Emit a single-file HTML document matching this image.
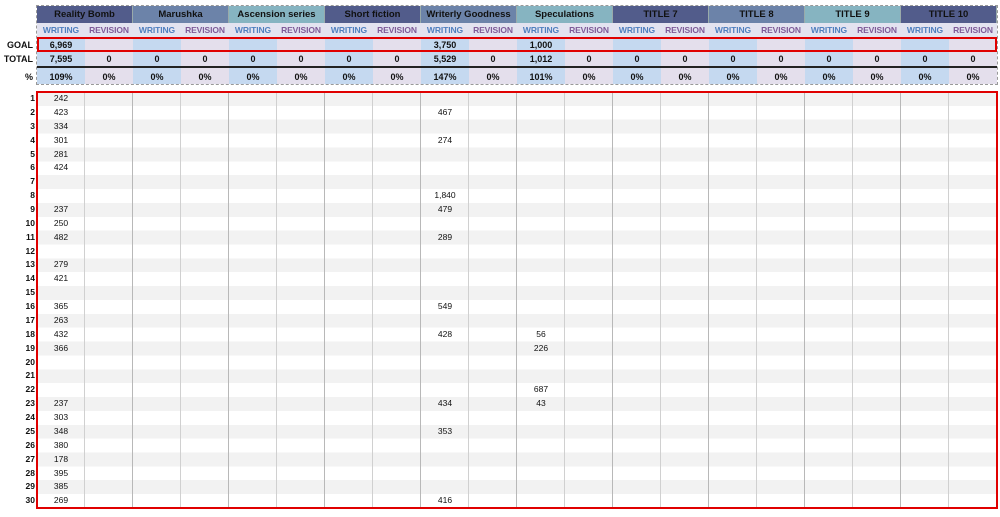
<!DOCTYPE html>
<html><head><meta charset="utf-8"><style>
*{margin:0;padding:0;box-sizing:border-box}
body{width:1000px;height:517px;background:#fff;font-family:"Liberation Sans",sans-serif;position:relative;overflow:hidden;color:#111}
.row{position:absolute;left:37px;width:960px;display:flex}
.row span{width:48px;text-align:center;font-weight:bold;font-size:9px;line-height:14px;flex:none}
.t{position:absolute;top:6px;left:37px;width:960px;height:17px;display:flex}
.t div{width:96px;flex:none;font-weight:bold;font-size:9.5px;text-align:center;line-height:17px;color:#111;border-right:1px solid #9aa}
.d{background:#525c8b}.m{background:#6c83a9}.c{background:#86b4c1}
.sub{top:23px;height:14px;background:#e3e3f0}
.sub span:nth-child(odd){color:#4f7fbf}.sub span:nth-child(even){color:#7e5a98}
.sub span{font-size:8.5px;line-height:14px;letter-spacing:-0.1px}
.bg{position:absolute;left:37px;width:960px;background:repeating-linear-gradient(90deg,#c5d9f0 0 48px,#e4dfec 48px 96px)}
.lab{position:absolute;right:967px;font-weight:bold;font-size:9px;line-height:14px}
.data{position:absolute;left:37px;top:92px;width:960px;height:416px;background:
repeating-linear-gradient(90deg,transparent 0 47px,#d0d0d0 47px 48px,transparent 48px 95px,#b8b8b8 95px 96px),
repeating-linear-gradient(180deg,#f2f2f2 0 13.87px,#fff 13.87px 27.73px)}
.n{position:absolute;font-size:8.5px;width:48px;text-align:center;line-height:13.87px}
.rn{position:absolute;right:965px;font-size:8.5px;font-weight:bold;line-height:13.87px}
</style></head><body>
<div style="position:absolute;left:36px;top:5px;width:962px;height:80px;border:1px dashed #999"></div>
<div class="t"><div class="d">Reality Bomb</div><div class="m">Marushka</div><div class="c">Ascension series</div><div class="d">Short fiction</div><div class="m">Writerly Goodness</div><div class="c">Speculations</div><div class="d">TITLE 7</div><div class="m">TITLE 8</div><div class="c">TITLE 9</div><div class="d">TITLE 10</div></div>
<div class="row sub"><span>WRITING</span><span>REVISION</span><span>WRITING</span><span>REVISION</span><span>WRITING</span><span>REVISION</span><span>WRITING</span><span>REVISION</span><span>WRITING</span><span>REVISION</span><span>WRITING</span><span>REVISION</span><span>WRITING</span><span>REVISION</span><span>WRITING</span><span>REVISION</span><span>WRITING</span><span>REVISION</span><span>WRITING</span><span>REVISION</span></div>
<div class="bg" style="top:37px;height:47px"></div>
<div style="position:absolute;left:37px;top:66px;width:960px;height:2px;background:#222"></div>
<div style="position:absolute;left:37px;top:37px;width:960px;height:15px;border:2px solid #e00000"></div>
<div class="lab" style="top:38px">GOAL</div>
<div class="lab" style="top:52px">TOTAL</div>
<div class="lab" style="top:70px">%</div>
<div class="row" style="top:38px"><span>6,969</span><span></span><span></span><span></span><span></span><span></span><span></span><span></span><span>3,750</span><span></span><span>1,000</span></div>
<div class="row" style="top:52px"><span>7,595</span><span>0</span><span>0</span><span>0</span><span>0</span><span>0</span><span>0</span><span>0</span><span>5,529</span><span>0</span><span>1,012</span><span>0</span><span>0</span><span>0</span><span>0</span><span>0</span><span>0</span><span>0</span><span>0</span><span>0</span></div>
<div class="row" style="top:70px"><span>109%</span><span>0%</span><span>0%</span><span>0%</span><span>0%</span><span>0%</span><span>0%</span><span>0%</span><span>147%</span><span>0%</span><span>101%</span><span>0%</span><span>0%</span><span>0%</span><span>0%</span><span>0%</span><span>0%</span><span>0%</span><span>0%</span><span>0%</span></div>
<div class="data"></div>
<div style="position:absolute;left:36px;top:91px;width:962px;height:418px;border:2px solid #e00000"></div>
<div class="rn" style="top:92.0px">1</div><div class="rn" style="top:105.9px">2</div><div class="rn" style="top:119.7px">3</div><div class="rn" style="top:133.6px">4</div><div class="rn" style="top:147.5px">5</div><div class="rn" style="top:161.4px">6</div><div class="rn" style="top:175.2px">7</div><div class="rn" style="top:189.1px">8</div><div class="rn" style="top:203.0px">9</div><div class="rn" style="top:216.8px">10</div><div class="rn" style="top:230.7px">11</div><div class="rn" style="top:244.6px">12</div><div class="rn" style="top:258.4px">13</div><div class="rn" style="top:272.3px">14</div><div class="rn" style="top:286.2px">15</div><div class="rn" style="top:300.1px">16</div><div class="rn" style="top:313.9px">17</div><div class="rn" style="top:327.8px">18</div><div class="rn" style="top:341.7px">19</div><div class="rn" style="top:355.5px">20</div><div class="rn" style="top:369.4px">21</div><div class="rn" style="top:383.3px">22</div><div class="rn" style="top:397.1px">23</div><div class="rn" style="top:411.0px">24</div><div class="rn" style="top:424.9px">25</div><div class="rn" style="top:438.8px">26</div><div class="rn" style="top:452.6px">27</div><div class="rn" style="top:466.5px">28</div><div class="rn" style="top:480.4px">29</div><div class="rn" style="top:494.2px">30</div>
<div class="n" style="left:37px;top:92.0px">242</div>
<div class="n" style="left:37px;top:105.9px">423</div><div class="n" style="left:421px;top:105.9px">467</div>
<div class="n" style="left:37px;top:119.7px">334</div>
<div class="n" style="left:37px;top:133.6px">301</div><div class="n" style="left:421px;top:133.6px">274</div>
<div class="n" style="left:37px;top:147.5px">281</div>
<div class="n" style="left:37px;top:161.4px">424</div>
<div class="n" style="left:421px;top:189.1px">1,840</div>
<div class="n" style="left:37px;top:203.0px">237</div><div class="n" style="left:421px;top:203.0px">479</div>
<div class="n" style="left:37px;top:216.8px">250</div>
<div class="n" style="left:37px;top:230.7px">482</div><div class="n" style="left:421px;top:230.7px">289</div>
<div class="n" style="left:37px;top:258.4px">279</div>
<div class="n" style="left:37px;top:272.3px">421</div>
<div class="n" style="left:37px;top:300.1px">365</div><div class="n" style="left:421px;top:300.1px">549</div>
<div class="n" style="left:37px;top:313.9px">263</div>
<div class="n" style="left:37px;top:327.8px">432</div><div class="n" style="left:421px;top:327.8px">428</div><div class="n" style="left:517px;top:327.8px">56</div>
<div class="n" style="left:37px;top:341.7px">366</div><div class="n" style="left:517px;top:341.7px">226</div>
<div class="n" style="left:517px;top:383.3px">687</div>
<div class="n" style="left:37px;top:397.1px">237</div><div class="n" style="left:421px;top:397.1px">434</div><div class="n" style="left:517px;top:397.1px">43</div>
<div class="n" style="left:37px;top:411.0px">303</div>
<div class="n" style="left:37px;top:424.9px">348</div><div class="n" style="left:421px;top:424.9px">353</div>
<div class="n" style="left:37px;top:438.8px">380</div>
<div class="n" style="left:37px;top:452.6px">178</div>
<div class="n" style="left:37px;top:466.5px">395</div>
<div class="n" style="left:37px;top:480.4px">385</div>
<div class="n" style="left:37px;top:494.2px">269</div><div class="n" style="left:421px;top:494.2px">416</div>
</body></html>
